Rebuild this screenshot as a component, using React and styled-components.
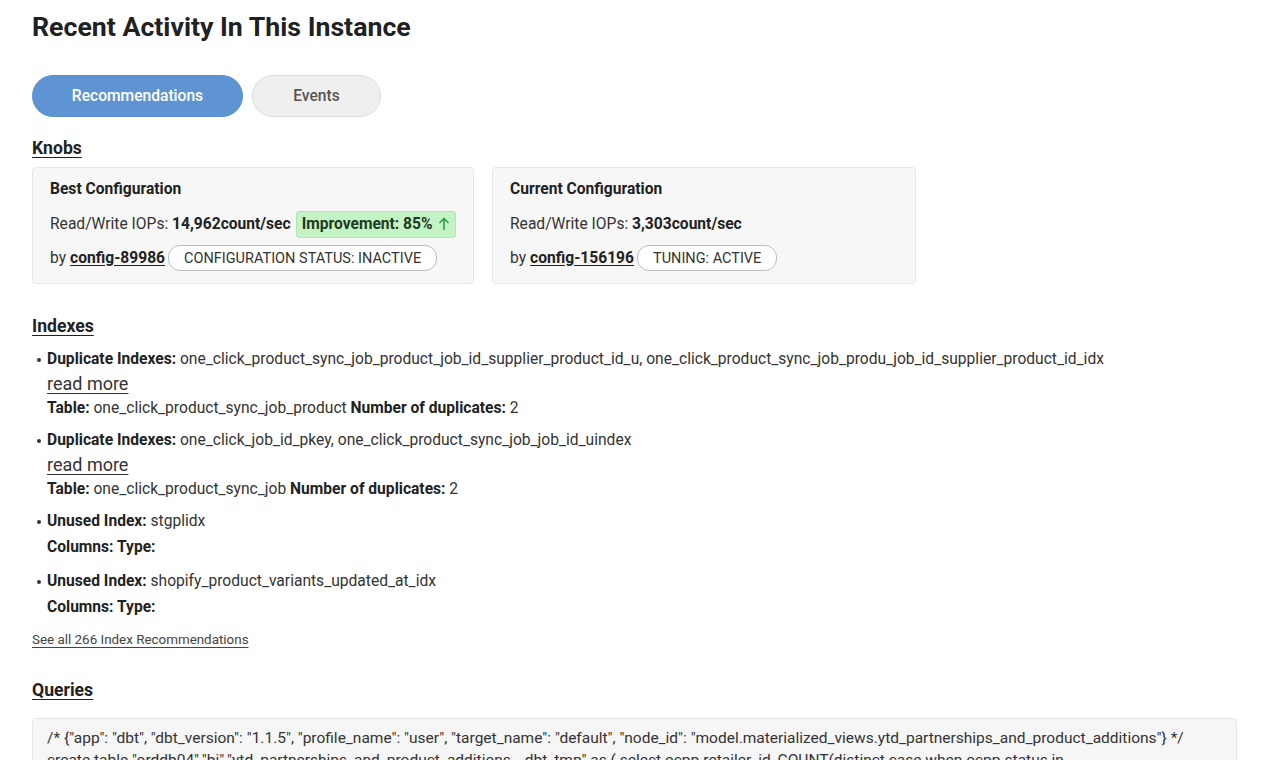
import styled, { createGlobalStyle } from 'styled-components';

const GlobalStyle = createGlobalStyle`
  body {
    margin: 0;
    background: #fff;
    font-family: Roboto, "Liberation Sans", sans-serif;
    color: #333;
  }
`;

const Page = styled.div`
  padding: 11px 33px 0 32px;
  height: 760px;
  overflow: hidden;
  box-sizing: border-box;
`;

const Title = styled.h1`
  margin: 0;
  font-size: 26.7px;
  line-height: 32px;
  font-weight: 700;
  color: #212121;
`;

const Tabs = styled.div`
  display: flex;
  gap: 9px;
  margin-top: 32px;
`;

const Tab = styled.button`
  height: 42px;
  width: ${(p) => p.$width}px;
  border-radius: 21px;
  font-family: inherit;
  font-size: 15.6px;
  font-weight: 500;
  border: 1px solid ${(p) => (p.$active ? '#5b91d0' : '#dcdcdc')};
  background: ${(p) => (p.$active ? '#5f94d2' : '#efefef')};
  color: ${(p) => (p.$active ? '#fff' : '#555')};
  cursor: pointer;
`;

const SectionTitle = styled.h2`
  margin: ${(p) => p.$top}px 0 0;
  font-size: 17.6px;
  line-height: 20px;
  font-weight: 700;
  color: #222;
  text-decoration: underline;
  text-underline-offset: 3px;
`;

const Cards = styled.div`
  display: flex;
  gap: 18px;
  margin-top: 9px;
`;

const Card = styled.div`
  width: ${(p) => p.$width}px;
  box-sizing: border-box;
  padding: 11px 17px 12px;
  background: #f7f7f7;
  border: 1px solid #e6e6e6;
  border-radius: 4px;
`;

const CardTitle = styled.div`
  font-size: 15.6px;
  line-height: 20px;
  font-weight: 700;
  color: #222;
`;

const CardRow = styled.div`
  display: flex;
  align-items: center;
  height: 26px;
  margin-top: ${(p) => p.$top}px;
  font-size: 15.6px;
  color: #333;
  white-space: nowrap;
`;

const Strong = styled.b`
  font-weight: 700;
  color: #222;
`;

const Badge = styled.span`
  display: inline-flex;
  align-items: center;
  gap: 5px;
  height: 25px;
  margin-left: 5px;
  padding: 0 5px;
  background: #c4f3c5;
  border: 1px solid #aee8b1;
  border-radius: 3px;
  font-weight: 700;
  color: #1f3a22;
`;

const ConfigLink = styled.a`
  margin-left: 4px;
  font-weight: 700;
  color: #222;
  text-decoration: underline;
  text-underline-offset: 2px;
`;

const Chip = styled.span`
  display: inline-flex;
  align-items: center;
  height: 24px;
  margin-left: 3px;
  padding: 0 15px;
  border: 1px solid #bdbdbd;
  border-radius: 12px;
  background: #fff;
  font-size: 14.5px;
  color: #333;
`;

const List = styled.ul`
  margin: 11px 0 0;
  padding: 0 0 0 15px;
  list-style: none;
`;

const Item = styled.li`
  position: relative;
  font-size: 15.6px;
  line-height: 24px;
  color: #333;
  margin-bottom: 8px;

  &::before {
    content: '';
    position: absolute;
    left: -10px;
    top: 11px;
    width: 4px;
    height: 4px;
    border-radius: 50%;
    background: #333;
  }
`;

const Line = styled.div`
  line-height: ${(p) => p.$lh || 24}px;
`;

const ReadMore = styled.a`
  display: block;
  width: fit-content;
  height: 25px;
  font-size: 18px;
  line-height: 25px;
  color: #333;
  text-decoration: underline;
  text-underline-offset: 3px;
`;

const SeeAll = styled.a`
  display: inline-block;
  font-size: 13.4px;
  line-height: 16px;
  color: #444;
  text-decoration: underline;
  text-underline-offset: 3px;
`;

const CodeBox = styled.div`
  margin-top: 18px;
  padding: 8px 14px;
  background: #f6f6f6;
  border: 1px solid #e6e6e6;
  border-radius: 4px;
  font-size: 15.5px;
  line-height: 22px;
  color: #333;
  white-space: nowrap;
  overflow: hidden;
`;

const ArrowUp = () => (
  <svg width="12" height="14" viewBox="0 0 12 14" fill="none" stroke="#2f9e4b" strokeWidth="1.6">
    <path d="M6 13V1.5M1.5 6L6 1.5 10.5 6" />
  </svg>
);

export default function App() {
  return (
    <Page>
      <GlobalStyle />
      <Title>Recent Activity In This Instance</Title>
      <Tabs>
        <Tab $active $width={211}>Recommendations</Tab>
        <Tab $width={129}>Events</Tab>
      </Tabs>

      <SectionTitle $top={21}>Knobs</SectionTitle>
      <Cards>
        <Card $width={442}>
          <CardTitle>Best Configuration</CardTitle>
          <CardRow $top={12}>
            Read/Write IOPs:&nbsp;<Strong>14,962count/sec</Strong>
            <Badge>
              Improvement: 85% <ArrowUp />
            </Badge>
          </CardRow>
          <CardRow $top={8}>
            by <ConfigLink>config-89986</ConfigLink>
            <Chip>CONFIGURATION STATUS: INACTIVE</Chip>
          </CardRow>
        </Card>
        <Card $width={424}>
          <CardTitle>Current Configuration</CardTitle>
          <CardRow $top={12}>
            Read/Write IOPs:&nbsp;<Strong>3,303count/sec</Strong>
          </CardRow>
          <CardRow $top={8}>
            by <ConfigLink>config-156196</ConfigLink>
            <Chip>TUNING: ACTIVE</Chip>
          </CardRow>
        </Card>
      </Cards>

      <SectionTitle $top={32}>Indexes</SectionTitle>
      <List>
        <Item>
          <Line>
            <Strong>Duplicate Indexes:</Strong> one_click_product_sync_job_product_job_id_supplier_product_id_u,
            one_click_product_sync_job_produ_job_id_supplier_product_id_idx
          </Line>
          <ReadMore>read more</ReadMore>
          <Line>
            <Strong>Table:</Strong> one_click_product_sync_job_product <Strong>Number of duplicates:</Strong> 2
          </Line>
        </Item>
        <Item>
          <Line>
            <Strong>Duplicate Indexes:</Strong> one_click_job_id_pkey, one_click_product_sync_job_job_id_uindex
          </Line>
          <ReadMore>read more</ReadMore>
          <Line>
            <Strong>Table:</Strong> one_click_product_sync_job <Strong>Number of duplicates:</Strong> 2
          </Line>
        </Item>
        <Item>
          <Line>
            <Strong>Unused Index:</Strong> stgplidx
          </Line>
          <Line $lh={28}>
            <Strong>Columns: Type:</Strong>
          </Line>
        </Item>
        <Item>
          <Line>
            <Strong>Unused Index:</Strong> shopify_product_variants_updated_at_idx
          </Line>
          <Line $lh={28}>
            <Strong>Columns: Type:</Strong>
          </Line>
        </Item>
      </List>
      <SeeAll>See all 266 Index Recommendations</SeeAll>

      <SectionTitle $top={32}>Queries</SectionTitle>
      <CodeBox>
        <div>
          /* {'{'}"app": "dbt", "dbt_version": "1.1.5", "profile_name": "user", "target_name": "default", "node_id":
          "model.materialized_views.ytd_partnerships_and_product_additions"{'}'} */
        </div>
        <div>
          create table "orddb04"."bi"."ytd_partnerships_and_product_additions__dbt_tmp" as ( select ocpp.retailer_id,
          COUNT(distinct case when ocpp.status in
        </div>
      </CodeBox>
    </Page>
  );
}
